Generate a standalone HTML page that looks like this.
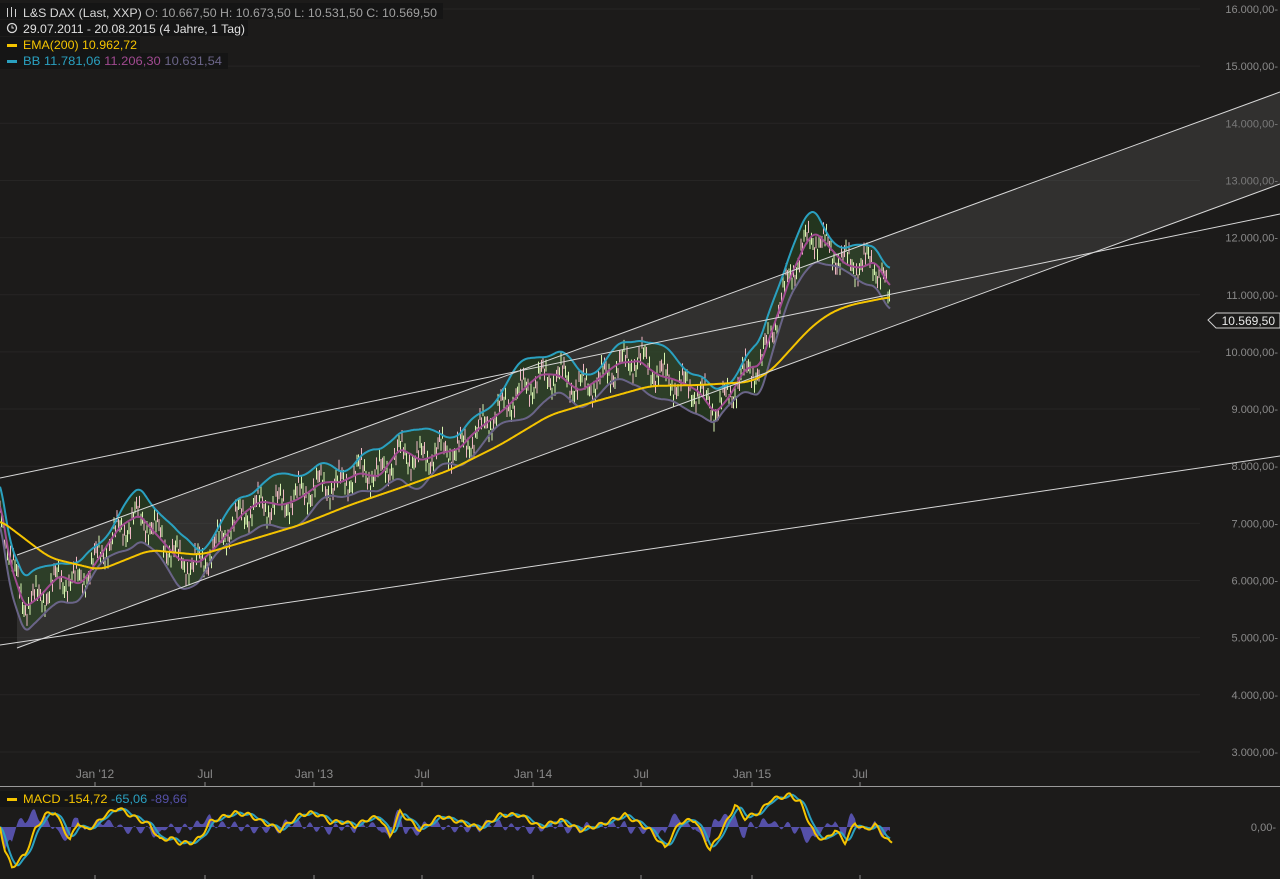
<!DOCTYPE html>
<html><head><meta charset="utf-8"><style>
html,body{margin:0;padding:0;background:#1c1b1a;width:1280px;height:879px;overflow:hidden}
svg{display:block}
text{font-family:"Liberation Sans",sans-serif}
</style></head><body>
<svg id="s" width="1280" height="879" xmlns="http://www.w3.org/2000/svg">
<rect width="1280" height="879" fill="#1c1b1a"/>
<g id="grid" stroke="#262524" stroke-width="1"></g>
<g id="axis" font-size="11" fill="#8a8a8a" text-anchor="end"></g>
<polygon points="17,555 1280,92 1280,184 17,648" fill="#5a5a5a" fill-opacity="0.35"/>
<path id="band" fill="#2a4a22" fill-opacity="0.55"/>
<g id="candles" stroke-width="1"></g>
<path id="bbu" fill="none" stroke="#2aa0c0" stroke-width="2"/>
<path id="bbl" fill="none" stroke="#6a6488" stroke-width="2"/>
<path id="bbm" fill="none" stroke="#a04a90" stroke-width="2"/>
<path id="ema" fill="none" stroke="#f5c400" stroke-width="2"/>
<g stroke="#d8d8d8" stroke-width="1">
<line x1="17" y1="555" x2="1280" y2="92"/>
<line x1="17" y1="648" x2="1280" y2="184"/>
<line x1="0" y1="478" x2="1280" y2="214"/>
<line x1="0" y1="645" x2="1280" y2="456"/>
</g>
<g font-size="12" fill="#8a8a8a" text-anchor="middle">
<text x="95" y="778">Jan '12</text><text x="205" y="778">Jul</text><text x="314" y="778">Jan '13</text><text x="422" y="778">Jul</text><text x="533" y="778">Jan '14</text><text x="641" y="778">Jul</text><text x="752" y="778">Jan '15</text><text x="860" y="778">Jul</text>
</g>
<g stroke="#8a8a8a"><line x1="95" y1="782" x2="95" y2="786"/><line x1="205" y1="782" x2="205" y2="786"/><line x1="314" y1="782" x2="314" y2="786"/><line x1="422" y1="782" x2="422" y2="786"/><line x1="533" y1="782" x2="533" y2="786"/><line x1="641" y1="782" x2="641" y2="786"/><line x1="752" y1="782" x2="752" y2="786"/><line x1="860" y1="782" x2="860" y2="786"/>
<line x1="95" y1="875" x2="95" y2="879"/><line x1="205" y1="875" x2="205" y2="879"/><line x1="314" y1="875" x2="314" y2="879"/><line x1="422" y1="875" x2="422" y2="879"/><line x1="533" y1="875" x2="533" y2="879"/><line x1="641" y1="875" x2="641" y2="879"/><line x1="752" y1="875" x2="752" y2="879"/><line x1="860" y1="875" x2="860" y2="879"/></g>
<line x1="0" y1="786.5" x2="1280" y2="786.5" stroke="#9a9a9a"/>
<path id="hist" fill="#5550a8"/>
<path id="sig" fill="none" stroke="#2aa0c0" stroke-width="2"/>
<path id="macd" fill="none" stroke="#f5c400" stroke-width="2"/>
<text x="1276" y="831" font-size="11" fill="#8a8a8a" text-anchor="end">0,00-</text>
<polygon points="1208,320 1216,313 1280,313 1280,328 1216,328" fill="#1c1b1a" stroke="#cfcfcf"/>
<text x="1275" y="325" font-size="12" fill="#e8e8e8" text-anchor="end">10.569,50</text>
<rect x="0" y="3" width="443" height="16" fill="#151515"/>
<rect x="0" y="20" width="248" height="16" fill="#151515"/>
<rect x="0" y="37" width="140" height="16" fill="#151515"/>
<rect x="0" y="53" width="228" height="16" fill="#151515"/>
<g font-size="12">
<g stroke="#d0d0d0" stroke-width="1"><line x1="7.5" y1="8" x2="7.5" y2="17"/><line x1="11.5" y1="7" x2="11.5" y2="17"/><line x1="15.5" y1="9" x2="15.5" y2="17"/></g>
<text x="23" y="17" fill="#d8d8d8" textLength="414" lengthAdjust="spacingAndGlyphs">L&amp;S DAX (Last, XXP)  <tspan fill="#a0a0a0">O: 10.667,50  H: 10.673,50  L: 10.531,50  C: 10.569,50</tspan></text>
<circle cx="12" cy="28" r="4.5" fill="none" stroke="#d8d8d8" stroke-width="1.3"/><path d="M12 25.5V28h2" stroke="#d8d8d8" fill="none"/>
<text x="23" y="33" fill="#e0e0e0" textLength="222" lengthAdjust="spacingAndGlyphs">29.07.2011 - 20.08.2015 (4 Jahre, 1 Tag)</text>
<rect x="7" y="44" width="10" height="3" fill="#f5c400"/>
<text x="23" y="49" fill="#f5c400" textLength="114" lengthAdjust="spacingAndGlyphs">EMA(200)  10.962,72</text>
<rect x="7" y="60" width="10" height="3" fill="#2aa0c0"/>
<text x="23" y="65" fill="#2aa0c0" textLength="199" lengthAdjust="spacingAndGlyphs">BB  11.781,06 <tspan fill="#a04a90">11.206,30</tspan> <tspan fill="#6a6488">10.631,54</tspan></text>
<rect x="0" y="791" width="188" height="16" fill="#151515"/>
<rect x="7" y="798" width="10" height="3" fill="#f5c400"/>
<text x="23" y="803" fill="#f5c400" textLength="164" lengthAdjust="spacingAndGlyphs">MACD  -154,72 <tspan fill="#2aa0c0">-65,06</tspan> <tspan fill="#5550a8">-89,66</tspan></text>
</g>
</svg>
<script>
(function(){
var NS="http://www.w3.org/2000/svg",$=function(i){return document.getElementById(i)};
var g=$("grid"),a=$("axis");
for(var p=16;p>=3;p--){var y=9+(16-p)*57.15;
var l=document.createElementNS(NS,"line");l.setAttribute("x1",0);l.setAttribute("x2",1200);l.setAttribute("y1",y);l.setAttribute("y2",y);g.appendChild(l);
var t=document.createElementNS(NS,"text");t.setAttribute("x",1278);t.setAttribute("y",y+4);t.textContent=p+".000,00-";a.appendChild(t);}
function interp(pts,x){for(var i=0;i<pts.length-2;i+=2){if(x<=pts[i+2]){var f=(x-pts[i])/(pts[i+2]-pts[i]);return pts[i+1]+f*(pts[i+3]-pts[i+1]);}}return pts[pts.length-1];}
function smooth(f,k){return function(x){var t=0,n=0;for(var j=-k;j<=k;j++){t+=f(x+j);n++;}return t/n;};}
var mid=[0,500,10,560,25,605,40,598,60,578,80,582,100,555,120,530,140,515,160,535,180,562,200,565,220,540,240,515,260,505,280,505,300,495,320,485,340,485,360,470,380,475,400,452,420,460,440,450,460,450,480,430,500,410,520,392,540,378,560,375,580,388,600,380,620,365,640,358,660,375,680,385,700,392,715,410,730,395,745,372,760,368,775,320,790,275,805,245,815,235,830,250,845,262,860,265,875,262,890,290];
var ema=[0,520,50,558,100,570,150,550,200,555,250,540,300,525,350,505,400,488,450,470,500,445,550,415,600,400,650,386,700,385,750,382,770,372,790,350,810,328,830,313,850,305,890,297];
function path(f,x0,x1){var d="";for(var x=x0;x<=x1;x++){d+=(x==x0?"M":"L")+x+" "+f(x).toFixed(1);}return d;}
var m=smooth(function(x){return interp(mid,Math.max(0,Math.min(890,x)))},4);
var w=function(x){return 20+6*Math.sin(x*0.05)};
var up=function(x){return m(x)-w(x)+5*Math.sin(x*0.13)},lo=function(x){return m(x)+w(x)+5*Math.sin(x*0.11)};
$("bbu").setAttribute("d",path(up,0,890));
$("bbl").setAttribute("d",path(lo,0,890));
$("bbm").setAttribute("d",path(function(x){return m(x)+3*Math.sin(x*0.09)},0,890));
var bd=path(up,0,890);for(var x=890;x>=0;x--)bd+="L"+x+" "+lo(x).toFixed(1);$("band").setAttribute("d",bd+"Z");
var ef=smooth(function(x){return interp(ema,Math.max(0,Math.min(890,x)))},10);
$("ema").setAttribute("d",path(ef,0,890));
var c=$("candles"),s="";
for(var x=0;x<=890;x+=1.5){var pr=m(x)+12*Math.sin(x*0.31)+7*Math.sin(x*1.7);if(x>884)pr+=(x-884)*4;var col=Math.sin(x*0.9)>0?"#d8f5b0":"#f0b8c4";
s+='<line x1="'+x+'" x2="'+x+'" y1="'+(pr-6)+'" y2="'+(pr+6)+'" stroke="'+col+'"/>';}
c.innerHTML=s;
var mc=[0,827,5,850,12,868,17,862,25,855,35,830,45,815,55,812,60,822,70,840,78,822,85,830,95,825,105,815,118,808,130,815,140,820,150,825,160,840,170,838,180,843,190,843,200,838,210,822,220,818,235,813,250,815,260,821,270,825,280,830,290,822,300,815,310,813,320,815,330,822,345,822,355,826,370,818,380,818,390,836,400,812,420,830,440,816,460,822,480,828,500,815,520,815,540,827,560,820,580,830,600,825,625,815,650,830,665,848,680,822,695,820,710,850,725,825,735,805,745,818,760,812,770,800,790,795,800,802,815,835,825,840,835,830,845,842,855,823,865,830,875,825,890,843];
var mf=function(x){return interp(mc,x)+2*Math.sin(x*0.5)};
var sf=function(x){var t=0;for(var k=0;k<8;k++)t+=mf(Math.max(0,x-k));return t/8};
$("macd").setAttribute("d",path(mf,0,892));
$("sig").setAttribute("d",path(sf,0,890));
var h="M0 827";for(var x=0;x<=890;x++){h+="L"+x+" "+(827+(mf(x)-sf(x))*1.6).toFixed(1);}h+="L890 827Z";$("hist").setAttribute("d",h);
})();
</script>
</body></html>
